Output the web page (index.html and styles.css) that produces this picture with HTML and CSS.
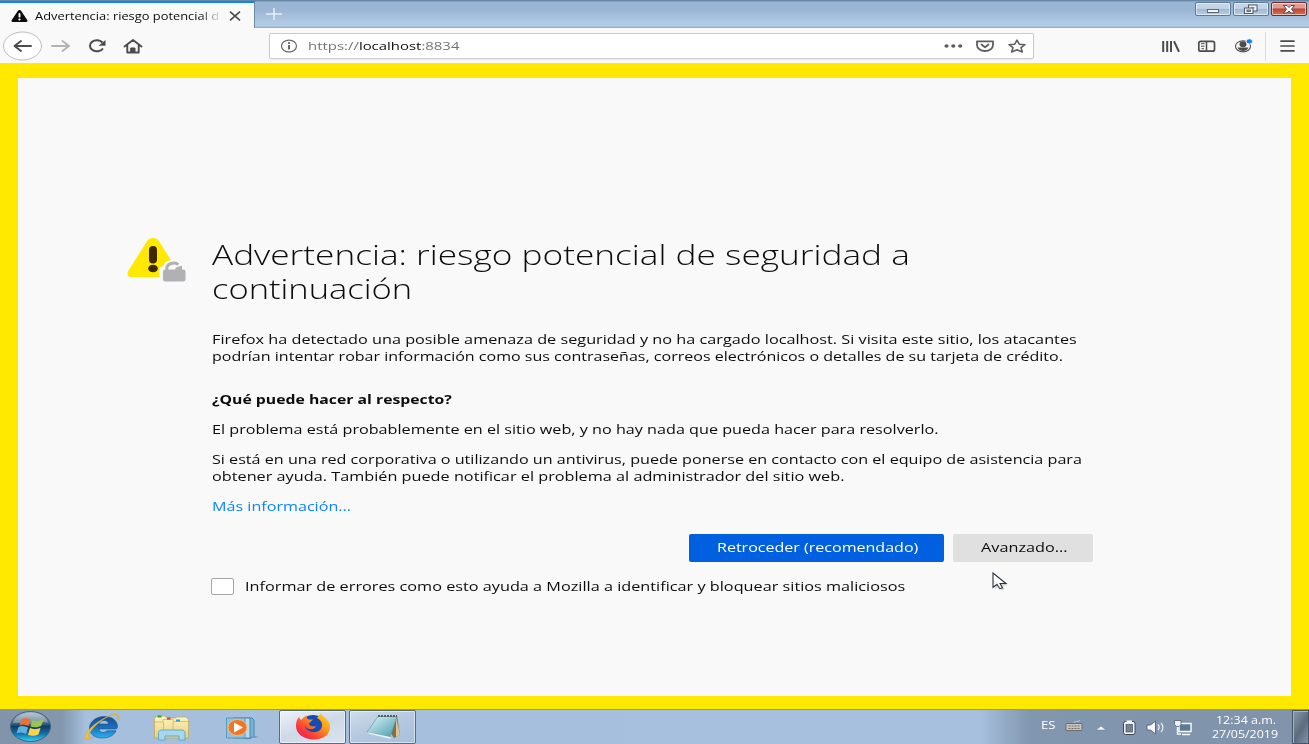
FILE: index.html
```html
<!DOCTYPE html>
<html lang="es">
<head>
<meta charset="utf-8">
<title>Advertencia: riesgo potencial de seguridad</title>
<link rel="stylesheet" href="styles.css">
</head>
<body>
<div class="desktop">
  <header class="tabbar">
    <div class="tab">
      <svg class="tab-icon" width="17" height="12" viewBox="0 0 17 13.500" preserveAspectRatio="none"><path d="M8.500 0C7.700 0 7.200.4 6.800 1.200L.8 11.300C0 12.700.5 13.400 2 13.400H15C16.500 13.400 17 12.700 16.200 11.300L10.200 1.200C9.800.4 9.300 0 8.500 0Z" fill="#0c0c0d"/><rect x="7.500" y="3.500" width="2" height="5" rx="1" fill="#f9f9fa"/><ellipse cx="8.500" cy="10.700" rx="1.200" ry="1.100" fill="#f9f9fa"/></svg>
      <span class="tab-title"><span class="line s-tab">Advertencia: riesgo potencial d</span></span>
      <svg class="tab-close" width="12" height="10" viewBox="0 0 12 10"><path d="M1 .7L11 9.300M11 .7L1 9.300" stroke="#4a4a4c" stroke-width="1.600"/></svg>
    </div>
    <svg class="newtab" width="16" height="12" viewBox="0 0 16 12"><path d="M0 6H16M8 0V12" stroke="#e6eef7" stroke-width="1.600"/></svg>
    <div class="controls">
      <div class="ctl"><svg width="34" height="13" viewBox="0 0 34 13"><rect x="11.500" y="6.500" width="11" height="3" fill="#f4f4f4" stroke="#5d6675"/></svg></div>
      <div class="ctl"><svg width="34" height="13" viewBox="0 0 34 13"><rect x="14.500" y="2" width="8.500" height="6" fill="#f0f2f5" stroke="#505968"/><rect x="17" y="4" width="3.500" height="1.500" fill="#8ba0b8"/><rect x="10.500" y="5" width="8.500" height="5.500" fill="#f0f2f5" stroke="#505968"/><rect x="13" y="7" width="3.500" height="1.500" fill="#8ba0b8" stroke="#505968" stroke-width=".8"/></svg></div>
      <div class="ctl close"><svg width="34" height="13" viewBox="0 0 34 13"><path d="M11.500 2.500H15L17 4.500 19 2.500H22.500L19.500 6.200 22.500 10H19L17 8 15 10H11.500L14.500 6.200Z" fill="#fff" stroke="#5c4550"/></svg></div>
    </div>
  </header>

  <nav class="navbar">
    <div class="nav-left">
      <svg width="150" height="34" viewBox="0 0 150 34" fill="none" stroke="#4c4c4e" stroke-width="1.900" stroke-linecap="round" stroke-linejoin="round">
        <ellipse cx="22.500" cy="17" rx="19" ry="14" fill="#fff" stroke="#bdbdbf" stroke-width="1"/>
        <path d="M31 17H15M21 12L14.500 17 21 22"/>
        <path d="M52 17H68M62.500 12L69 17 62.500 22" stroke="#b3b3b5"/>
        <path d="M102.500 13.500A7 5.500 0 1 0 103 19.500" stroke-width="2" stroke-linecap="butt"/><path d="M105.500 11V16.800H98.500Z" fill="#4c4c4e" stroke="none"/>
        <path d="M124.500 17.500L133 11 141.500 17.500M127.300 16.500V23.500H138.700V16.500" stroke-width="1.900"/><path d="M131 19H135V23H131Z" fill="#4c4c4e" stroke-width="1"/>
      </svg>
    </div>
    <div class="urlbar">
      <svg width="17" height="14" viewBox="0 0 17 14"><ellipse cx="8" cy="7" rx="7.500" ry="5.900" fill="none" stroke="#68686a" stroke-width="1.200"/><path d="M8 6V10.500" stroke="#58585a" stroke-width="1.800"/><ellipse cx="8" cy="4" rx="1.100" ry=".9" fill="#58585a"/></svg>
      <span class="url"><span class="line s-url">https://<b>localhost</b>:8834</span></span>
      <svg class="url-icons" width="84" height="18" viewBox="0 0 84 18" fill="none" stroke="#5e5e60" stroke-width="1.800" stroke-linejoin="round"><g fill="#5e5e60" stroke="none"><ellipse cx="2.500" cy="9" rx="2.100" ry="1.700"/><ellipse cx="9.300" cy="9" rx="2.100" ry="1.700"/><ellipse cx="16.200" cy="9" rx="2.100" ry="1.700"/></g><path d="M33 4.300H49V8C49 11.500 45.500 14 41 14S33 11.500 33 8Z"/><path d="M37.500 7.500L41 10.300 44.500 7.500" stroke-linecap="round"/><path d="M73 3.200L75.300 7.200 81 7.700 77 10.600 78.300 15 73 12.800 67.700 15 69 10.600 65 7.700 70.700 7.200Z" stroke-width="1.600"/></svg>
    </div>
    <svg class="nav-right" width="146" height="34" viewBox="0 0 146 34" fill="none" stroke="#4c4c4e" stroke-width="1.900">
      <path d="M3.200 12V23M7.200 12V23M11 12V23M14 12.200L19 22.800" stroke-width="2"/>
      <rect x="38.800" y="12.300" width="15.700" height="9.900" rx="2" stroke-width="1.700"/><path d="M46.500 12V22.500" stroke-width="1.500"/><path d="M41 14.700H44.500M41 17.200H44.500M41.500 19.700H44" stroke-width="1"/>
      <ellipse cx="83" cy="17.300" rx="7.500" ry="5.600" stroke-width="1.100"/><ellipse cx="83" cy="15.200" rx="3.500" ry="3" fill="#4c4c4e" stroke="none"/><path d="M77.500 18.500H88.500C87.500 21 85.500 22 83 22S78.500 21 77.500 18.500Z" fill="#4c4c4e" stroke="none"/><ellipse cx="89.300" cy="12.400" rx="3.300" ry="2.700" fill="#0a84ff" stroke="#f9f9fa" stroke-width="1"/>
      <path d="M105.500 3V32" stroke="#dcdcde" stroke-width="1"/>
      <path d="M121 12.200H134M121 17H134M121 21.800H134" stroke-width="1.700" stroke-linecap="round"/>
    </svg>
  </nav>

  <main class="page">
    <section class="panel">
      <svg class="warn" width="60" height="46" viewBox="0 0 60 46">
        <path d="M26 0C23.500 0 21.500 1 20 3.300L1.500 32.500C-.8 36.500 1 39.300 5.500 39.300H46.500C51 39.300 52.800 36.500 50.500 32.500L32 3.300C30.500 1 28.500 0 26 0Z" fill="#ffe900"/>
        <rect x="22" y="8" width="8" height="17.500" rx="4" fill="#3e2800"/><ellipse cx="26" cy="30.500" rx="4.800" ry="3.800" fill="#3e2800"/>
        <path d="M32.500 46V31.500C32.500 29.500 34 28.300 36.500 28C37 24 41 22 47 22S59 24.500 60 29.500V46Z" fill="#f9f9fa"/>
        <path d="M39.700 34V31C39.700 25.500 47.500 23.300 51.300 26.700" fill="none" stroke="#b1b1b3" stroke-width="3"/><path d="M48.500 32V29.800L55 27.500V32Z" fill="#b1b1b3"/><rect x="36" y="31.500" width="22.500" height="12" rx="2.300" fill="#b1b1b3"/>
      </svg>
      <div class="content">
        <h1><span class="line s-h1">Advertencia: riesgo potencial de seguridad a</span><span class="line s-h2">continuación</span></h1>
        <p class="intro"><span class="line s-a">Firefox ha detectado una posible amenaza de seguridad y no ha cargado localhost. Si visita este sitio, los atacantes</span><span class="line s-b">podrían intentar robar información como sus contraseñas, correos electrónicos o detalles de su tarjeta de crédito.</span></p>
        <h2><span class="line s-c">¿Qué puede hacer al respecto?</span></h2>
        <p><span class="line s-d">El problema está probablemente en el sitio web, y no hay nada que pueda hacer para resolverlo.</span></p>
        <p><span class="line s-e">Si está en una red corporativa o utilizando un antivirus, puede ponerse en contacto con el equipo de asistencia para</span><span class="line s-f">obtener ayuda. También puede notificar el problema al administrador del sitio web.</span></p>
        <p class="more"><span class="line s-g">Más información...</span></p>
        <div class="buttons">
          <div class="btn primary"><span class="line s-p">Retroceder (recomendado)</span></div>
          <div class="btn"><span class="line s-v">Avanzado...</span></div>
        </div>
        <div class="report"><i class="check"></i><span class="line s-i">Informar de errores como esto ayuda a Mozilla a identificar y bloquear sitios maliciosos</span></div>
      </div>
    </section>
  </main>

  <footer class="taskbar">
    <svg class="launch" width="270" height="34" viewBox="0 0 270 34">
      <defs>
        <linearGradient id="orb" x1="0" y1="0" x2="0" y2="1"><stop offset="0" stop-color="#a9bccb"/><stop offset=".35" stop-color="#52728e"/><stop offset=".5" stop-color="#123d63"/><stop offset=".75" stop-color="#0c76ad"/><stop offset="1" stop-color="#35d8fa"/></linearGradient>
        <linearGradient id="ie" x1="0" y1="0" x2="0" y2="1"><stop offset="0" stop-color="#164c91"/><stop offset=".5" stop-color="#1c6db9"/><stop offset="1" stop-color="#24b4ef"/></linearGradient>
        <linearGradient id="folder" x1="0" y1="0" x2="0" y2="1"><stop offset="0" stop-color="#fff5c4"/><stop offset="1" stop-color="#e8cf78"/></linearGradient>
      </defs>
      <ellipse cx="30.500" cy="16.500" rx="20" ry="15" fill="url(#orb)" stroke="#3f6381"/>
      <path d="M13 13C15 6 22 3 30.500 3S46 6 48 13C40 9 34 16 26 14 20 13 17 13 13 13Z" fill="#fff" opacity=".25"/>
      <path d="M22 9C25 7 28 8 30.500 9.500L28.500 16C25.500 14.300 22.500 14 19.500 15.500Z" fill="#ee7132"/><path d="M32.500 10C36 11.500 39 11 44 9.500L41 16C37 17.700 33.500 17.500 30.500 16.500Z" fill="#9ac454"/><path d="M18.500 17C22 15.500 25 16 28 17.500L26 24C23 22.500 20 22 16.500 23.500Z" fill="#61b0df"/><path d="M30 18C33 19.500 36.500 19.500 40.500 18L38.500 24.500C34 26.500 31 26 28 24.700Z" fill="#ffd24a"/>
      <path d="M116.500 19H99C99.500 22.800 104 23.500 107 20.800H116C113.500 26 108.500 28 102.500 28 94.500 28 89.500 24 89.500 18S96 6.500 104 6.500 117.500 10.500 117.500 17ZM99 14H108.500C108.500 9.700 100.500 9 99 14Z" fill="url(#ie)" stroke="#174f8e" stroke-width=".6"/>
      <path d="M118 10.500C120.500 4 117 3 110 5.500 99 9.500 88 19 85 25.500 83 30 88 30.500 94 27 88.500 28.500 87 27 89.500 23 94 15.500 104 8 111 5.500 116.500 3.500 118.500 5 118 10.500Z" fill="#efbf3c" stroke="#d79d26" stroke-width=".4"/>
      <path d="M154.500 28V8.500L157 6H165L167 8H176V7H186L188.500 9.500V28Z" fill="url(#folder)" stroke="#c5a95b" stroke-width=".8"/><path d="M155 12H163V9.500H173V11.500H188M163.500 12V25M173 12V25" fill="none" stroke="#cfb364" stroke-width=".8"/><path d="M157.500 6.500H161.500" stroke="#2ca14a" stroke-width="2"/><path d="M167 8.500H170.500" stroke="#cd432f" stroke-width="2"/><path d="M176 10.500H180" stroke="#2f9be4" stroke-width="2"/>
      <path d="M158.500 30V22.500C158.500 20.500 160 20 162 20H181C184 20 185 21 185 23V30H179V26H165V30Z" fill="#a5d8ee" stroke="#63a9cd"/>
      <path d="M239 8H252L254 10V26.500L250 28.500H243" fill="#78b3d2" stroke="#4889ad"/><path d="M233 8H250V28H233Z" fill="#badbe9" stroke="#4e8aae"/><path d="M226.500 8H245V28H226.500Z" fill="#8fc3da" stroke="#5d9bbd"/><path d="M254 26L259 27 254 28" fill="#6d93b5"/><ellipse cx="237.500" cy="17.500" rx="9.500" ry="8" fill="#ee7726" stroke="#f7ba8b"/><path d="M234 12.500L243 17.500 234 22.500Z" fill="#fff"/>
    </svg>
    <div class="apps">
      <div class="app active"><svg width="42" height="30" viewBox="0 0 42 30">
        <defs><linearGradient id="fox" x1="1" y1="0" x2="0" y2="1"><stop offset="0" stop-color="#ffe22b"/><stop offset=".35" stop-color="#ff9a1d"/><stop offset=".7" stop-color="#fb3b39"/><stop offset="1" stop-color="#d71475"/></linearGradient></defs>
        <ellipse cx="21" cy="13.500" rx="12" ry="10.500" fill="#164bb0"/><path d="M7 5C7.500 7 9 8 10 7.500 11 5.500 13 4 15 3.500 14 5 15 7 17 7.500H21L17 11.500C17 14 21 15 24 14 22 19 14 18 13 13 13 22 30 23 30 13 30 9 27 7 25 6 26 4 28 3 29 1.500 31 5 37 7 38 13 39 22 32 27.500 22 27.500S4 22 4 14C4 10 5 7 7 5Z" fill="url(#fox)"/></svg></div>
      <div class="app"><svg width="42" height="30" viewBox="0 0 42 30"><defs><linearGradient id="note" x1="0" y1="0" x2="1" y2="1"><stop offset="0" stop-color="#e2f6f7"/><stop offset="1" stop-color="#439bae"/></linearGradient></defs><path d="M17 4L35 4 38 23 32 26Z" fill="#816f4b"/><path d="M34 5L38 23 34 25Z" fill="#d4c59c"/><path d="M16 4.500H35L28 25 5 20Z" fill="url(#note)" stroke="#649eaa" stroke-width=".7"/><path d="M16 4H35" stroke="#59615f" stroke-width="2" stroke-dasharray="2 1"/><path d="M5 20L28 25 29 27 8 22Z" fill="#eef4f5"/></svg></div>
    </div>
    <div class="tray">
      <span class="lang"><span class="line s-es">ES</span></span>
      <svg width="130" height="34" viewBox="0 0 130 34" fill="none">
        <rect x="1" y="13.500" width="16" height="7" rx="1" fill="#c8c4be" stroke="#696b6d"/><path d="M3.500 16H15M3.500 18.500H15" stroke="#6f6d68" stroke-dasharray="2 1"/><path d="M9 13C9 10.500 14 12.500 15 10" stroke="#d1cec7"/>
        <path d="M31 20L36 16 41 20Z" fill="#f3f5f7" stroke="#65758a" stroke-width=".5"/>
        <rect x="58.500" y="11.500" width="11.500" height="13" rx="2" fill="#eef3f7" stroke="#3e4855"/><rect x="61" y="14.500" width="6.500" height="7.500" fill="#758291" stroke="#47525f" stroke-width=".7"/><path d="M61.500 10.500H67V12H61.500Z" fill="#fff"/>
        <path d="M82 15H85.500L90.500 11V24L85.500 20H82Z" fill="#f4f6f8" stroke="#4a5563" stroke-width=".8"/><path d="M93 14.500C94.500 16 94.500 18.500 93 20M96 13C98.500 15.500 98.500 19.500 96 22" stroke="#edf1f5" stroke-width="1.200"/>
        <rect x="114" y="13.500" width="12" height="8" fill="#617993" stroke="#f5f7f9" stroke-width="1.500"/><path d="M117 24.500H125M112.500 16V24H116" stroke="#f5f7f9" stroke-width="1.400"/><path d="M109.500 10.500H116V14.500L114 16.500H111.500L109.500 14.500Z" fill="#edf0f2" stroke="#465260" stroke-width=".7"/>
      </svg>
      <div class="clock"><div><span class="line s-time">12:34 a.m.</span></div><div><span class="line s-date">27/05/2019</span></div></div>
      <div class="show"></div>
    </div>
  </footer>
  <svg class="cursor" width="18" height="20" viewBox="0 0 18 20"><path d="M3 3V17L7 14 9.500 18.500 12.500 17.500 10.500 13.500H16Z" fill="#777" opacity=".3"/><path d="M1 1V15.300L5 12.200 7.800 16.700 10.500 15.700 8 11.500H14Z" fill="#fff" stroke="#2d3040" stroke-width="1.100"/></svg>
</div>
</body>
</html>
```
FILE: styles.css
```css
* { box-sizing: border-box; }
body { margin: 0; overflow: hidden; font-family: "Open Sans", "Noto Sans", sans-serif; color: #0c0c0d; }
svg { display: block; flex: none; }
.desktop { position: relative; width: 1309px; height: 744px; display: flex; flex-direction: column; }

/* wide, single-line runs of text */
.line { display: block; width: max-content; white-space: nowrap; transform-origin: 0 50%; transform: scaleX(1.3); }
.s-tab { transform: scaleX(1.225); }
.s-url { transform: scaleX(1.297); }
.s-h1 { transform: scaleX(1.304); }
.s-h2 { transform: scaleX(1.278); }
.s-b { transform: scaleX(1.283); }
.s-c { transform: scaleX(1.262); }
.s-d { transform: scaleX(1.294); }
.s-e { transform: scaleX(1.291); }
.s-g { transform: scaleX(1.29); }
.s-p { transform: scaleX(1.283); }
.s-es, .s-time, .s-date { transform: scaleX(1.245); }

.tabbar { height: 28px; display: flex; align-items: flex-start; background: linear-gradient(#6382a0 0, #6c8cad 1px, #9ab5d3 2px, #9bb6d5 10px, #b5cde7 26px, #8fa5bf 28px); }
.tab { width: 255px; height: 27px; margin-top: 1px; border-top: 2px solid #0a84ff; border-right: 1px solid #6f89a8; background: #f9f9fa; display: flex; align-items: center; padding-left: 11px; }
.tab-title { width: 187px; margin-left: 7px; overflow: hidden; font-size: 10.5px; line-height: 20px; -webkit-mask-image: linear-gradient(90deg, #000 165px, transparent 187px); mask-image: linear-gradient(90deg, #000 165px, transparent 187px); }
.tab-close { margin-left: 7px; }
.newtab { margin: 8px 0 0 11px; }
.controls { margin-left: auto; display: flex; gap: 2px; padding: 2px 2px 0 0; }
.ctl { width: 36px; height: 14px; border: 1px solid #5f7896; border-radius: 2px; box-shadow: inset 0 0 0 1px rgba(255,255,255,.55); background: linear-gradient(#c3d4e7 45%, #9fb7d2 50%, #b9cee4); overflow: hidden; }
.ctl.close { border-color: #6b2c33; background: linear-gradient(#dc9d92 40%, #bd4632 50%, #d07559); }

.navbar { height: 36px; display: flex; align-items: center; background: #f9f9fa; border-bottom: 1px solid #d9d9c8; }
.nav-left { width: 269px; }
.urlbar { width: 765px; height: 26px; display: flex; align-items: center; padding-left: 11px; background: #fff; border: 1px solid #ccc; border-radius: 2px; box-shadow: 0 1px 2px rgba(0,0,0,.06); }
.url { flex: 1; margin-left: 10px; font-size: 11.5px; line-height: 20px; color: #737373; }
.url b { font-weight: 400; color: #0c0c0d; }
.url-icons { margin-right: 5px; }
.nav-right { margin-left: 126px; }

.page { height: 645px; background: #ffe900; padding: 14px 18px 13px; }
.panel { height: 618px; background: #f9f9fa; display: flex; align-items: flex-start; padding: 160px 0 0 109px; }
.content { width: 882px; margin-left: 24px; }
h1, h2, p { margin: 0; font-size: 12.5px; line-height: 17.25px; padding-left: .5px; }
h1 { font-size: 27px; line-height: 33.5px; font-weight: 300; }
h2 { margin: 26px 0 12.4px; font-weight: 700; }
.intro { margin-top: 25.5px; margin-bottom: 0; }
p { margin-bottom: 13px; }
.more { color: #0a84ff; }
.buttons { margin-top: 18px; display: flex; justify-content: flex-end; gap: 9px; }
.btn { width: 140px; height: 28px; padding-left: 27.5px; border-radius: 2px; background: #e0e0e1; font-size: 12.5px; line-height: 28px; }
.btn.primary { width: 255px; background: #0060df; color: #fff; }
.report { margin-top: 16px; display: flex; align-items: center; font-size: 12.5px; line-height: 17px; }
.check { width: 23px; height: 17px; margin-right: 11px; background: #fff; border: 1px solid #a5a5a7; border-radius: 2px; }

.taskbar { height: 35px; display: flex; border-top: 1px solid #8e9890; background: linear-gradient(90deg, #8093aa 0, #8397ae 62px, #a5bfdd 86px, #a6c0de 980px, #8196af 1030px, #8093aa 100%); }
.launch { margin-right: 9px; }
.apps { display: flex; gap: 3px; padding-top: 0; }
.app { width: 67px; height: 34px; display: flex; align-items: center; justify-content: center; border: 1px solid #596b82; border-radius: 2px; background: linear-gradient(160deg, #d0ddeb, #b4c8df 50%, #a9c0db); box-shadow: inset 0 0 0 1px rgba(255,255,255,.5); }
.app.active { background: linear-gradient(160deg, #edf2f8, #ced9e8 50%, #dbe5f0); }
.tray { margin-left: auto; display: flex; color: #fff; }
.lang { width: 24px; font-size: 10.5px; line-height: 30px; }
.clock { width: 76px; margin-left: 17px; padding-top: 3px; font-size: 10px; line-height: 14px; display: flex; flex-direction: column; }
.clock div:first-child { padding-left: 4px; }
.show { width: 17px; margin-left: 4px; border: 1px solid #46556a; box-shadow: inset 1px 1px #a5b2c3; background: linear-gradient(120deg, #8b99aa, #5c6b7e 55%, #8494a8); }
.cursor { position: absolute; left: 992px; top: 572px; }
```
